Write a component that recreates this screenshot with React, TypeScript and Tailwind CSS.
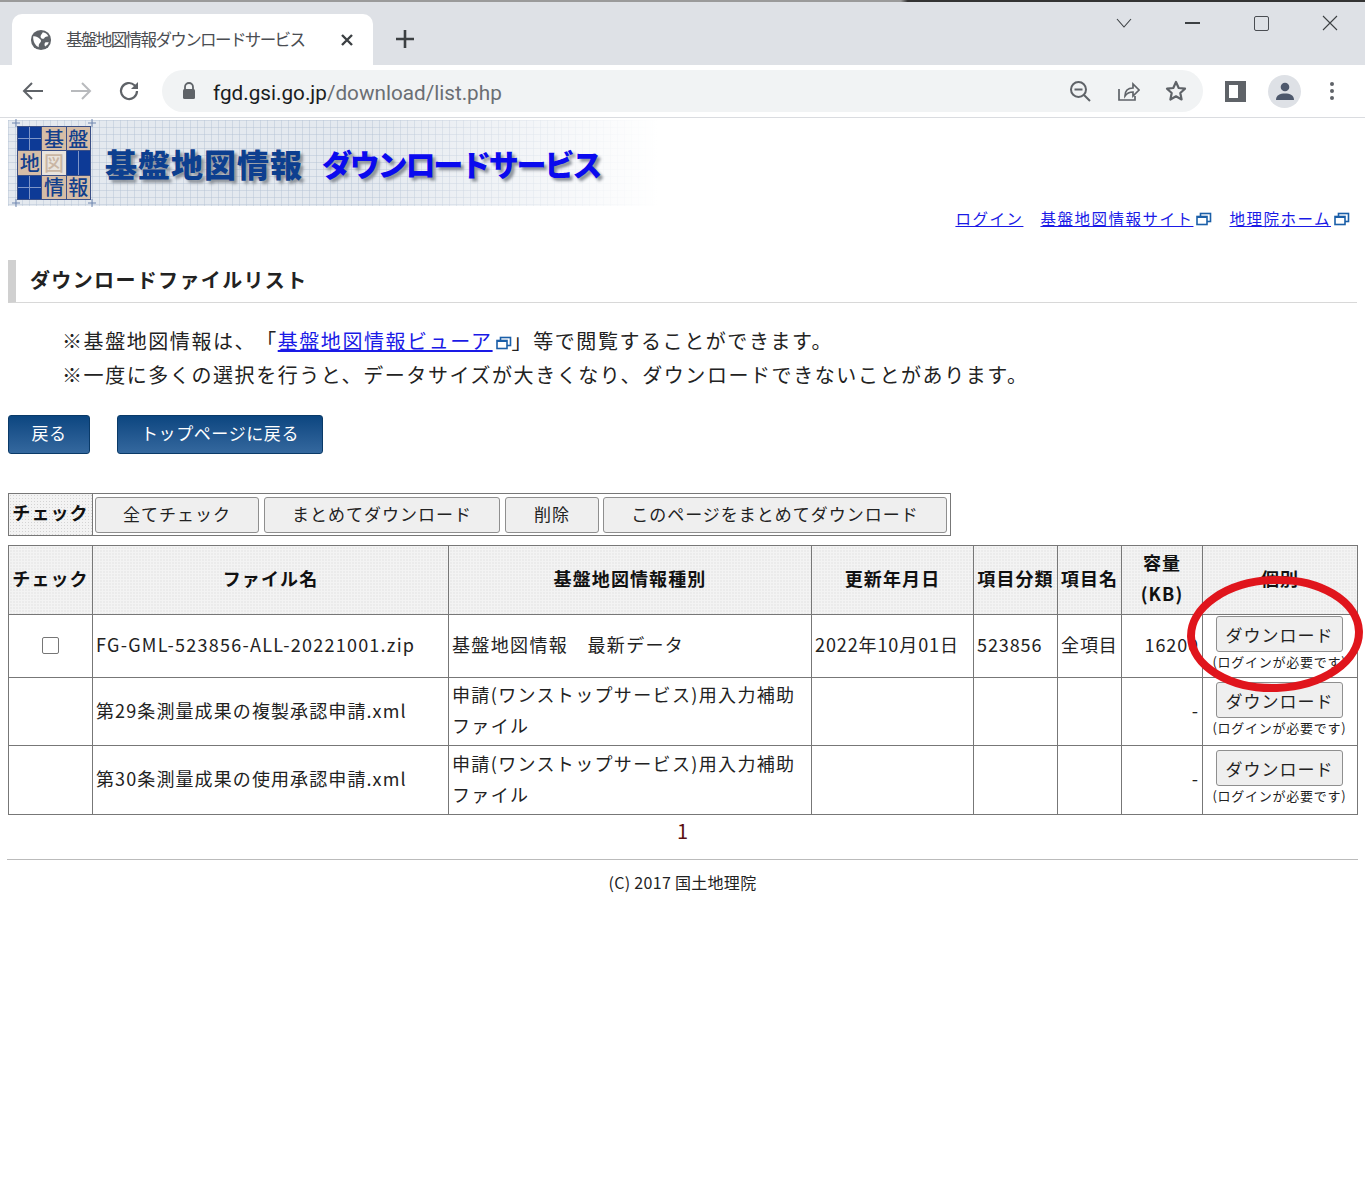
const jp = "font-['Noto_Sans_CJK_JP','Noto_Sans',sans-serif]";
const hatch =
  "bg-[#f3f3f3] bg-[radial-gradient(#d4d4d4_0.8px,transparent_0.9px)] bg-[length:3px_3px]";
const cell = "border border-[#777] px-[3px] pb-[3px] text-[18px] tracking-[0.9px] text-[#222]";
const nameCell = "border border-[#777] px-[3px] pb-[3px] text-[18px] tracking-[1.1px] text-[#222]";
const typeCell = "border border-[#777] px-[3px] pb-[3px] text-[18px] tracking-[1.35px] text-[#222]";
const th = `border border-[#777] pb-[4px] text-[18px] font-bold tracking-[1.1px] text-[#111] text-center ${hatch}`;

const ExternalIcon = () => (
  <svg width="16" height="14" viewBox="0 0 16 14" className="inline-block align-[-1px] ml-[3px]">
    <rect x="4.5" y="1.5" width="10" height="8" fill="none" stroke="#1b5fa8" strokeWidth="1.6" />
    <rect x="1" y="4.5" width="10" height="8" fill="#fff" stroke="#1b5fa8" strokeWidth="1.6" />
    <rect x="1" y="4" width="10" height="2" fill="#1b5fa8" />
  </svg>
);

const GrayButton = ({ label, className }: { label: string; className: string }) => (
  <button className={`h-[36px] rounded-[3px] border border-[#8f8f8f] bg-[#efefef] pb-[2px] text-[17px] tracking-[1px] text-[#222] ${className}`}>
    {label}
  </button>
);

const BlueButton = ({ label, className }: { label: string; className: string }) => (
  <button className={`h-[39px] rounded-[3px] border border-[#0a3a68] bg-gradient-to-b from-[#0b4680] to-[#34689e] pb-[3px] text-[17px] tracking-[0.6px] text-white ${className}`}>
    {label}
  </button>
);

const DownloadCell = ({ top }: { top: string }) => (
  <td className="border border-[#777] p-0 text-center align-top">
    <div className={`flex flex-col items-center pr-[1px] ${top}`}>
      <button className="h-[36px] w-[127px] rounded-[3px] border border-[#8f8f8f] bg-[#efefef] pt-[1px] text-[17px] tracking-[1px] text-[#222]">
        ダウンロード
      </button>
      <span className="whitespace-nowrap text-[13px] leading-[19px] tracking-[0.75px] text-[#222]">
        (ログインが必要です)
      </span>
    </div>
  </td>
);

const LogoCell = ({ label, light }: { label?: string; light?: boolean }) => (
  <div
    className={`flex items-center justify-center text-[20px] leading-none font-medium ${
      label
        ? light
          ? "bg-[#e9e4dd] text-[#c9b6a4]"
          : "bg-[#d6bda6] text-[#123f8c]"
        : "bg-[#0d3a96] bg-[linear-gradient(#0000_48%,#7f96c8_48%,#7f96c8_52%,#0000_52%),linear-gradient(90deg,#0000_48%,#7f96c8_48%,#7f96c8_52%,#0000_52%)]"
    }`}
  >
    {label}
  </div>
);

const Banner = () => (
  <div className="ml-[8px] mt-[2px] flex h-[86px] w-[650px] items-center bg-[linear-gradient(90deg,#ffffff00_55%,#ffffff_100%),linear-gradient(#b7c5d680_1px,transparent_1px),linear-gradient(90deg,#b7c5d680_1px,transparent_1px),linear-gradient(#e4e9ef,#e4e9ef)] bg-[length:100%_100%,7px_7px,7px_7px,100%_100%]">
    <div className="relative ml-[9px]">
      <div className="grid h-[74px] w-[74px] grid-cols-3 grid-rows-3 gap-[1px] border border-[#3a4f86] bg-[#3a4f86]">
        <LogoCell />
        <LogoCell label="基" />
        <LogoCell label="盤" />
        <LogoCell label="地" />
        <LogoCell label="図" light />
        <LogoCell />
        <LogoCell />
        <LogoCell label="情" />
        <LogoCell label="報" />
      </div>
      {/* crop marks at the logo corners */}
      <svg width="88" height="88" viewBox="0 0 88 88" className="absolute left-[-7px] top-[-7px]" stroke="#6f86b0" strokeWidth="1" fill="none">
        <path d="M2 4h8M6 0v8M78 4h8M82 0v8M2 84h8M6 80v8M78 84h8M82 80v8" />
      </svg>
    </div>
    <span className="ml-[14px] text-[32px] leading-none font-black tracking-[1px] whitespace-nowrap text-[#0d3f8f] [text-shadow:3px_3px_3px_#8b9199]">
      基盤地図情報
    </span>
    <span className="ml-[19px] text-[30px] leading-none font-black tracking-[-2.2px] whitespace-nowrap text-[#0a0aee] [text-shadow:3px_3px_3px_#8b9199]">
      ダウンロードサービス
    </span>
  </div>
);

const BrowserChrome = () => (
  <div className="font-['Roboto',sans-serif]">
    <div className="h-[2px] bg-[linear-gradient(90deg,#9a9a9a_0%,#9a9a9a_66%,#333333_66.500%,#333333_100%)]" />
    <div className="relative h-[63px] bg-[#dee1e6]">
      <div className="absolute left-[12px] top-[12px] flex h-[51px] w-[361px] items-center rounded-t-[10px] bg-white">
        <svg width="22" height="22" viewBox="0 0 24 24" className="ml-[18px]">
          <circle cx="12" cy="12" r="11" fill="#5f6368" />
          <path d="M3.500 8c3-.5 5 1 7 2.500s2 3 .5 4.500-1.500 3-1.500 5C6 18.500 3 14 3.500 8zM14 3.500c2.500.5 5 2 6 4.500-2 .5-3.500.5-4.500 2s-4 .5-4-1.500 1.500-3 2.500-5zM17 14.500h3.500c-.5 2-2 3.500-4 4.500-1-1.500-1-3.500.5-4.500z" fill="#fff" />
        </svg>
        <span className={`ml-[14px] w-[250px] whitespace-nowrap text-[16.5px] tracking-[-1.6px] text-[#4a4d52] ${jp}`}>
          基盤地図情報ダウンロードサービス
        </span>
        <svg width="14" height="14" viewBox="0 0 14 14" className="ml-[24px]" fill="none" stroke="#3c4043" strokeWidth="2.4">
          <path d="M2 2l10 10M12 2L2 12" />
        </svg>
      </div>
      <svg width="20" height="20" viewBox="0 0 20 20" className="absolute left-[395px] top-[27px]" fill="none" stroke="#3c4043" strokeWidth="2.6">
        <path d="M10 1v18M1 10h18" />
      </svg>
      <div className="absolute right-0 top-[13px] flex items-center text-[#3c4043]">
        <svg width="16" height="10" viewBox="0 0 16 10" className="mr-[53px]" fill="none" stroke="#3c4043" strokeWidth="1.1">
          <path d="M1 1l7 8 7-8" />
        </svg>
        <div className="mr-[54px] h-[1.5px] w-[15px] bg-[#3c4043]" />
        <div className="mr-[53px] h-[15px] w-[15px] rounded-[2px] border-[1.5px] border-[#4a4d52]" />
        <svg width="16" height="16" viewBox="0 0 16 16" className="mr-[27px]" fill="none" stroke="#3c4043" strokeWidth="1.1">
          <path d="M1 1l14 14M15 1L1 15" />
        </svg>
      </div>
    </div>
    <div className="flex h-[53px] items-center border-b border-[#dadce0] bg-white">
      <svg width="24" height="24" viewBox="0 0 24 24" className="ml-[21px]" fill="none" stroke="#5f6368" strokeWidth="2">
        <path d="M22 12H3M11 4l-8 8 8 8" />
      </svg>
      <svg width="24" height="24" viewBox="0 0 24 24" className="ml-[24px]" fill="none" stroke="#b8babd" strokeWidth="2">
        <path d="M2 12h19M13 4l8 8-8 8" />
      </svg>
      <svg width="24" height="24" viewBox="0 0 24 24" className="ml-[24px]" fill="none" stroke="#5f6368" strokeWidth="2.2">
        <path d="M20 12a8 8 0 1 1-2.500-5.800L20 8.500" />
        <path d="M21 3v7h-7" fill="#5f6368" stroke="none" />
      </svg>
      <div className="ml-[21px] flex h-[42px] w-[1041px] items-center rounded-full bg-[#f1f3f4]">
        <svg width="14" height="18" viewBox="0 0 14 18" className="ml-[20px]">
          <path d="M3 8V5a4 4 0 0 1 8 0v3" fill="none" stroke="#5f6368" strokeWidth="1.8" />
          <rect x="1" y="7" width="12" height="10" rx="1.5" fill="#5f6368" />
        </svg>
        <span className="ml-[17px] pt-[5px] text-[20.7px] leading-none text-[#1a1c20]">
          fgd.gsi.go.jp<span className="text-[#6a6e73]">/download/list.php</span>
        </span>
        <svg width="24" height="24" viewBox="0 0 24 24" className="ml-auto" fill="none" stroke="#5f6368" strokeWidth="2">
          <circle cx="10.5" cy="10.5" r="7.5" />
          <path d="M6.500 10.500h8M16 16l6 6" />
        </svg>
        <svg width="24" height="24" viewBox="0 0 24 24" className="ml-[24px]" fill="none" stroke="#5f6368" strokeWidth="1.7">
          <path d="M3 10v11h16v-4M9 17c0-6 4-8 8-8V5l6 6-6 6v-4c-3 0-6 1-8 4z" />
        </svg>
        <svg width="24" height="24" viewBox="0 0 24 24" className="ml-[24px] mr-[15px]" fill="none" stroke="#5f6368" strokeWidth="2.2">
          <path d="M12 3l2.700 6 6.300.7-4.700 4.300 1.300 6.500-5.600-3.200-5.600 3.200 1.300-6.500L3 9.700 9.300 9z" strokeLinejoin="round" />
        </svg>
      </div>
      <div className="ml-[22px] h-[21px] w-[21px] border-[4px] border-r-[8px] border-[#5f6368] bg-white" />
      <div className="ml-[22px] flex h-[33px] w-[33px] items-center justify-center rounded-full bg-[#dee1e6]">
        <svg width="20" height="20" viewBox="0 0 20 20" fill="#4d586c">
          <circle cx="10" cy="6" r="4.3" />
          <path d="M1 19c0-5 4-6.500 9-6.500s9 1.500 9 6.500z" />
        </svg>
      </div>
      <div className="ml-[29px] flex flex-col gap-[3px]">
        <div className="h-[4px] w-[4px] rounded-full bg-[#5f6368]" />
        <div className="h-[4px] w-[4px] rounded-full bg-[#5f6368]" />
        <div className="h-[4px] w-[4px] rounded-full bg-[#5f6368]" />
      </div>
    </div>
  </div>
);

export default function App() {
  return (
    <div className={`relative h-[1181px] w-[1365px] overflow-hidden bg-white ${jp}`}>
      <BrowserChrome />
      <Banner />

      <div className="flex h-[26px] items-center justify-end gap-[17px] pr-[15px] text-[15.5px] tracking-[1.5px] text-[#1a1ae6]">
        <a className="underline">ログイン</a>
        <a className="underline">
          基盤地図情報サイト
          <ExternalIcon />
        </a>
        <a className="underline">
          地理院ホーム
          <ExternalIcon />
        </a>
      </div>

      <h2 className="mx-[8px] mt-[28px] flex h-[43px] items-center border-b border-l-[8px] border-[#d0d0d0] border-b-[#d8d8d8] pb-[2px] pl-[14px] text-[20px] font-bold tracking-[1.35px] text-[#222]">
        ダウンロードファイルリスト
      </h2>

      <div className="ml-[62px] mt-[21px] text-[20px] leading-[34px] tracking-[1.57px] text-[#222] [text-spacing-trim:space-all]">
        <p>
          ※基盤地図情報は、「<a className="text-[#1a1ae6] underline">基盤地図情報ビューア</a>
          <ExternalIcon />」等で閲覧することができます。
        </p>
        <p>※一度に多くの選択を行うと、データサイズが大きくなり、ダウンロードできないことがあります。</p>
      </div>

      <div className="ml-[8px] mt-[23px] flex gap-[27px]">
        <BlueButton label="戻る" className="w-[82px]" />
        <BlueButton label="トップページに戻る" className="w-[206px]" />
      </div>

      <div className="ml-[8px] mt-[39px] flex h-[43px] w-[943px] items-center border border-[#777]">
        <div className={`flex h-full w-[84px] items-center justify-center border-r border-[#777] pb-[4px] text-[18px] font-bold tracking-[1.1px] text-[#111] ${hatch}`}>
          チェック
        </div>
        <div className="flex gap-[5px] pl-[2px]">
          <GrayButton label="全てチェック" className="w-[164px]" />
          <GrayButton label="まとめてダウンロード" className="w-[236px]" />
          <GrayButton label="削除" className="w-[94px]" />
          <GrayButton label="このページをまとめてダウンロード" className="-ml-[1px] w-[344px]" />
        </div>
      </div>

      <table className="ml-[8px] mt-[9px] w-[1349px] table-fixed border-collapse">
        <colgroup>
          <col className="w-[84px]" />
          <col className="w-[356px]" />
          <col className="w-[363px]" />
          <col className="w-[162px]" />
          <col className="w-[84px]" />
          <col className="w-[64px]" />
          <col className="w-[81px]" />
          <col className="w-[155px]" />
        </colgroup>
        <tbody>
          <tr className="h-[69px]">
            <th className={th}>チェック</th>
            <th className={th}>ファイル名</th>
            <th className={th}>基盤地図情報種別</th>
            <th className={th}>更新年月日</th>
            <th className={th}>項目分類</th>
            <th className={th}>項目名</th>
            <th className={`${th} leading-[31px]`}>
              容量
              <br />
              (KB)
            </th>
            <th className={th}>個別</th>
          </tr>
          <tr className="h-[63px]">
            <td className="border border-[#777] pb-[6px] text-center">
              <input type="checkbox" className="h-[17px] w-[17px] appearance-none rounded-[2px] border border-[#767676] bg-white align-middle" />
            </td>
            <td className={`${nameCell} tracking-[1.25px]`}>FG-GML-523856-ALL-20221001.zip</td>
            <td className={typeCell}>基盤地図情報　最新データ</td>
            <td className={`${cell} whitespace-nowrap`}>2022年10月01日</td>
            <td className={cell}>523856</td>
            <td className={`${cell} whitespace-nowrap`}>全項目</td>
            <td className={`${cell} text-right`}>16200</td>
            <DownloadCell top="pt-[1px]" />
          </tr>
          <tr className="h-[68px]">
            <td className={cell} />
            <td className={nameCell}>第29条測量成果の複製承認申請.xml</td>
            <td className={`${typeCell} leading-[31px]`}>申請(ワンストップサービス)用入力補助ファイル</td>
            <td className={cell} />
            <td className={cell} />
            <td className={cell} />
            <td className={`${cell} text-right`}>-</td>
            <DownloadCell top="pt-[4px]" />
          </tr>
          <tr className="h-[69px]">
            <td className={cell} />
            <td className={nameCell}>第30条測量成果の使用承認申請.xml</td>
            <td className={`${typeCell} leading-[31px]`}>申請(ワンストップサービス)用入力補助ファイル</td>
            <td className={cell} />
            <td className={cell} />
            <td className={cell} />
            <td className={`${cell} text-right`}>-</td>
            <DownloadCell top="pt-[4px]" />
          </tr>
        </tbody>
      </table>

      <p className="mt-[2px] text-center text-[20px] leading-[28px] text-[#5a1010]">1</p>
      <div className="mx-[7px] mt-[14px] border-t border-[#bbb]" />
      <p className="mt-[12px] text-center text-[16px] leading-[20px] tracking-[0.3px] text-[#222]">(C) 2017 国土地理院</p>

      {/* hand-drawn red annotation over the download button */}
      <svg width="190" height="130" viewBox="0 0 190 130" className="absolute left-[1180px] top-[569px]" fill="none">
        <ellipse cx="95" cy="65" rx="84" ry="54" stroke="#e0151c" strokeWidth="8" transform="rotate(-2 95 65)" />
      </svg>
    </div>
  );
}
